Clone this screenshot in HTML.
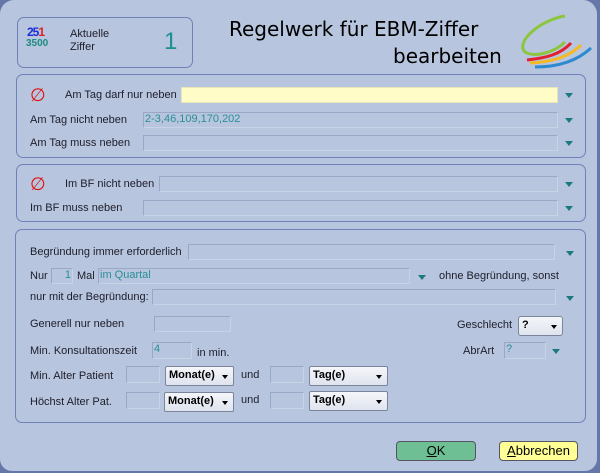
<!DOCTYPE html>
<html><head><meta charset="utf-8"><style>
*{margin:0;padding:0;box-sizing:border-box}
body{width:600px;height:473px;background:#6477a8;font-family:"Liberation Sans",sans-serif;font-size:11px;color:#1d1d2a;position:relative;overflow:hidden}
#win{position:absolute;left:0;top:0;width:597px;height:471px;background:#b8c5de;border-radius:14px 14px 12px 12px}
.a{position:absolute;white-space:nowrap}
.grp{position:absolute;border:1px solid #7080b8;border-radius:7px}
.f{position:absolute;border:1px solid #9aa7c6;border-bottom-color:#c9d3e6;border-right-color:#c9d3e6;background:#b8c5de;color:#2a8f98;padding-left:1px;line-height:13px}
.arr{position:absolute;width:0;height:0;border-left:4px solid transparent;border-right:4px solid transparent;border-top:5px solid #1b7a80}
.sel{position:absolute;background:linear-gradient(#f4f6fa,#dfe4ee);border:1px solid #7a849a;border-radius:2px;font-weight:bold;color:#000;padding-left:3px;line-height:17px;font-size:11px}
.sel:after{content:"";position:absolute;right:5px;top:8px;border-left:3px solid transparent;border-right:3px solid transparent;border-top:4px solid #000}
.btn{position:absolute;border:1px solid #556;border-radius:4px;text-align:center;font-size:13px;line-height:18px;color:#000}
</style></head><body><div id="win">
<div class="grp" style="left:17px;top:17px;width:176px;height:51px"></div>
<div class="a" style="left:27px;top:25px;font-weight:bold;font-size:12px;color:#1a2ed8;letter-spacing:-1px">25<span style="color:#e02020">1</span></div>
<div class="a" style="left:26px;top:38px;font-weight:bold;font-size:10px;color:#1d8a80">3500</div>
<div class="a" style="left:70px;top:28px;font-size:11px;line-height:13px">Aktuelle<br>Ziffer</div>
<div class="a" style="left:164px;top:28px;font-size:24px;color:#1d8e92">1</div>
<div class="a" style="left:229px;top:17px;font-family:'DejaVu Sans',sans-serif;font-size:20px;color:#000">Regelwerk für EBM-Ziffer</div>
<div class="a" style="left:393px;top:44px;font-family:'DejaVu Sans',sans-serif;font-size:20px;color:#000">bearbeiten</div>
<svg class="a" style="left:515px;top:10px" width="80" height="62" viewBox="515 10 80 62">
<path d="M565 16 C540 20 515 42 525 52 C535 58 555 52 565 42" fill="none" stroke="#8cc63f" stroke-width="3"/>
<path d="M527 60 C545 58 560 55 571 43" fill="none" stroke="#e22030" stroke-width="3"/>
<path d="M530 63 C550 62 568 58 581 45" fill="none" stroke="#f5b921" stroke-width="3"/>
<path d="M535 67 C555 67 575 63 591 48" fill="none" stroke="#2e8ad0" stroke-width="3"/>
</svg>

<div class="grp" style="left:16px;top:74px;width:570px;height:84px"></div>
<div class="a" style="left:30px;top:85px;color:#e01010;font-size:18px">∅</div>
<div class="a" style="left:65px;top:89px">Am Tag darf nur neben</div>
<div class="f" style="left:181px;top:87px;width:377px;height:16px;background:#fffcc8;border-color:#e8e6b8"></div>
<div class="arr" style="left:565px;top:93px"></div>
<div class="a" style="left:30px;top:114px">Am Tag nicht neben</div>
<div class="f" style="left:143px;top:112px;width:415px;height:16px">2-3,46,109,170,202</div>
<div class="arr" style="left:565px;top:118px"></div>
<div class="a" style="left:30px;top:137px">Am Tag muss neben</div>
<div class="f" style="left:143px;top:135px;width:415px;height:16px"></div>
<div class="arr" style="left:565px;top:141px"></div>

<div class="grp" style="left:16px;top:164px;width:570px;height:58px"></div>
<div class="a" style="left:30px;top:174px;color:#e01010;font-size:18px">∅</div>
<div class="a" style="left:65px;top:178px">Im BF nicht neben</div>
<div class="f" style="left:159px;top:176px;width:399px;height:16px"></div>
<div class="arr" style="left:565px;top:182px"></div>
<div class="a" style="left:30px;top:202px">Im BF muss neben</div>
<div class="f" style="left:143px;top:200px;width:415px;height:16px"></div>
<div class="arr" style="left:565px;top:206px"></div>

<div class="grp" style="left:15px;top:229px;width:571px;height:194px"></div>
<div class="a" style="left:30px;top:246px">Begründung immer erforderlich</div>
<div class="f" style="left:188px;top:244px;width:367px;height:16px"></div>
<div class="arr" style="left:566px;top:251px"></div>
<div class="a" style="left:30px;top:270px">Nur</div>
<div class="f" style="left:51px;top:268px;width:22px;height:16px;text-align:right;padding-right:1px">1</div>
<div class="a" style="left:77px;top:270px">Mal</div>
<div class="f" style="left:98px;top:268px;width:312px;height:16px">im Quartal</div>
<div class="arr" style="left:418px;top:275px"></div>
<div class="a" style="left:439px;top:270px">ohne Begründung, sonst</div>
<div class="a" style="left:30px;top:291px">nur mit der Begründung:</div>
<div class="f" style="left:152px;top:289px;width:404px;height:16px"></div>
<div class="arr" style="left:566px;top:296px"></div>
<div class="a" style="left:30px;top:318px">Generell nur neben</div>
<div class="f" style="left:154px;top:316px;width:77px;height:16px"></div>
<div class="a" style="left:457px;top:319px">Geschlecht</div>
<div class="sel" style="left:518px;top:316px;width:45px;height:20px;border-radius:3px">?</div>
<div class="a" style="left:30px;top:345px">Min. Konsultationszeit</div>
<div class="f" style="left:152px;top:342px;width:40px;height:17px">4</div>
<div class="a" style="left:197px;top:347px">in min.</div>
<div class="a" style="left:463px;top:345px">AbrArt</div>
<div class="f" style="left:504px;top:342px;width:42px;height:17px">?</div>
<div class="arr" style="left:552px;top:349px"></div>
<div class="a" style="left:30px;top:370px">Min. Alter Patient</div>
<div class="f" style="left:126px;top:366px;width:34px;height:17px"></div>
<div class="sel" style="left:165px;top:366px;width:69px;height:20px">Monat(e)</div>
<div class="a" style="left:241px;top:369px">und</div>
<div class="f" style="left:270px;top:366px;width:34px;height:17px"></div>
<div class="sel" style="left:309px;top:366px;width:79px;height:20px">Tag(e)</div>
<div class="a" style="left:30px;top:396px">Höchst Alter Pat.</div>
<div class="f" style="left:126px;top:392px;width:34px;height:17px"></div>
<div class="sel" style="left:164px;top:392px;width:70px;height:20px">Monat(e)</div>
<div class="a" style="left:241px;top:394px">und</div>
<div class="f" style="left:270px;top:392px;width:34px;height:17px"></div>
<div class="sel" style="left:309px;top:391px;width:79px;height:20px">Tag(e)</div>

<div class="btn" style="left:396px;top:441px;width:80px;height:20px;background:#6ec094"><u>O</u>K</div>
<div class="btn" style="left:499px;top:441px;width:79px;height:20px;background:#ffff96"><u>A</u>bbrechen</div>
</div></body></html>
